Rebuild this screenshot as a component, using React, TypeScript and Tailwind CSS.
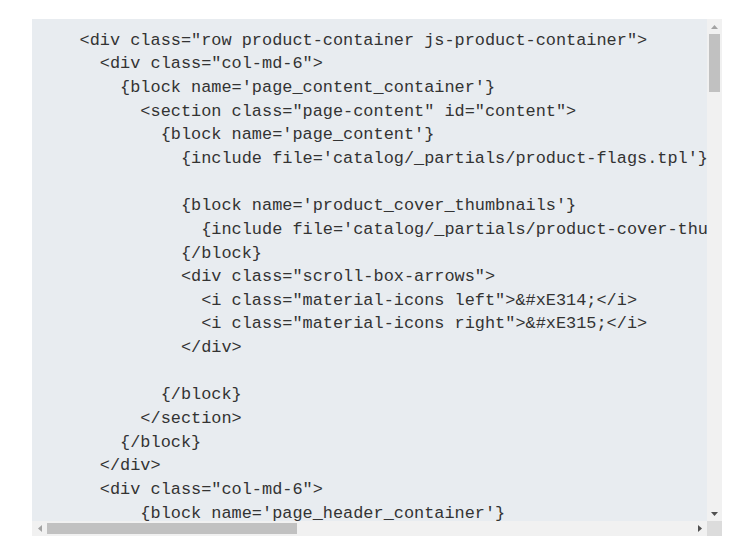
const code = `    <div class="row product-container js-product-container">
      <div class="col-md-6">
        {block name='page_content_container'}
          <section class="page-content" id="content">
            {block name='page_content'}
              {include file='catalog/_partials/product-flags.tpl'}

              {block name='product_cover_thumbnails'}
                {include file='catalog/_partials/product-cover-thumbnails.tpl'}
              {/block}
              <div class="scroll-box-arrows">
                <i class="material-icons left">&#xE314;</i>
                <i class="material-icons right">&#xE315;</i>
              </div>

            {/block}
          </section>
        {/block}
      </div>
      <div class="col-md-6">
          {block name='page_header_container'}
            {block name='page_header'}
              <h1 class="h1">{block name='page_title'}{$product.name}{/block}</h1>
            {/block}
          {/block}`

const Arrow = ({ dir, light }: { dir: 'up' | 'down' | 'left' | 'right'; light?: boolean }) => {
  const points = {
    up: '0,4 7,4 3.5,0',
    down: '0,0 7,0 3.5,4',
    left: '4,0 4,7 0,3.5',
    right: '0,0 0,7 4,3.5',
  }[dir]
  const vertical = dir === 'up' || dir === 'down'
  return (
    <svg
      width={vertical ? 7 : 4}
      height={vertical ? 4 : 7}
      viewBox={vertical ? '0 0 7 4' : '0 0 4 7'}
      className="block"
    >
      <polygon points={points} fill={light ? '#a3a3a3' : '#505050'} />
    </svg>
  )
}

const App = () => {
  return (
    <div className="min-h-screen bg-white pl-[32px] pt-[19px]">
      <div className="grid w-[690px] grid-cols-[675px_15px] grid-rows-[502px_15px] bg-[#e8ecf0]">
        <div className="overflow-hidden">
          <pre className="text-[#333333] font-['Liberation_Mono',monospace] text-[16.9px] leading-[23.66px] pl-[7px] pt-[9.6px] whitespace-pre">
            {code}
          </pre>
        </div>

        <div className="flex flex-col bg-[#f1f1f1]">
          <div className="flex h-[15px] items-center justify-center">
            <Arrow dir="up" light />
          </div>
          <div className="flex-1 px-[2px]">
            <div className="h-[58px] w-[11px] bg-[#c1c1c1]" />
          </div>
          <div className="flex h-[15px] items-center justify-center">
            <Arrow dir="down" />
          </div>
        </div>

        <div className="flex bg-[#f1f1f1]">
          <div className="flex w-[15px] items-center justify-center">
            <Arrow dir="left" light />
          </div>
          <div className="flex flex-1 items-center">
            <div className="h-[11px] w-[250px] bg-[#c1c1c1]" />
          </div>
          <div className="flex w-[15px] items-center justify-center">
            <Arrow dir="right" />
          </div>
        </div>

        <div className="bg-[#dcdcdc]" />
      </div>
    </div>
  )
}

export default App
